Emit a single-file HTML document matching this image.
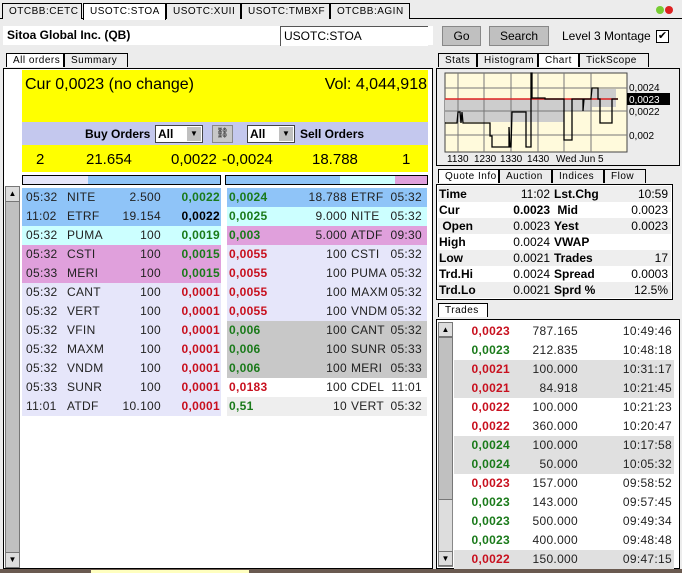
<!DOCTYPE html>
<html><head><style>
*{margin:0;padding:0;box-sizing:border-box}
body{width:682px;height:573px;background:#ececec;font-family:"Liberation Sans",Arial,sans-serif;font-size:12px;position:relative;overflow:hidden;color:#000}
.a{position:absolute}
.tab{position:absolute;top:3px;height:16px;font-size:10px;letter-spacing:0.5px;padding-left:6px;line-height:15px;border:1px solid #000;border-bottom:none;background:#ececec}
.st{position:absolute;height:14px;font-size:10px;letter-spacing:0.5px;padding-left:6px;line-height:13px;border:1px solid #000;border-bottom:none;background:#ececec}
.row{position:absolute;height:19px;line-height:19px;font-size:12px;color:#222;letter-spacing:0.3px}
.row span{position:absolute}
.g{color:#1a7a1a;font-weight:bold}
.r{color:#c8101e;font-weight:bold}
.q{position:absolute;left:438px;width:233px;height:16px;line-height:16px;font-size:12px}
.q span{position:absolute}
.b{font-weight:bold}
.tr{position:absolute;left:454px;width:220px;height:19px;line-height:19px;font-size:12px;color:#222;letter-spacing:0.3px}
.tr span{position:absolute}
</style></head><body>
<div class="a" style="left:0;top:18px;width:682px;height:1px;background:#000"></div>
<div class="tab" style="left:2px;width:80px">OTCBB:CETC</div>
<div class="tab" style="left:83px;width:83px;background:#fff;height:17px">USOTC:STOA</div>
<div class="tab" style="left:166px;width:75px">USOTC:XUII</div>
<div class="tab" style="left:241px;width:89px">USOTC:TMBXF</div>
<div class="tab" style="left:330px;width:80px">OTCBB:AGIN</div>
<div class="a" style="left:656px;top:6px;width:8px;height:8px;border-radius:50%;background:#7c3"></div>
<div class="a" style="left:665px;top:6px;width:8px;height:8px;border-radius:50%;background:#d22"></div>
<div class="a" style="left:3px;top:26px;width:430px;height:19px;background:#fff"></div>
<div class="a b" style="left:7px;top:28px;font-size:12px">Sitoa Global Inc. (QB)</div>
<div class="a" style="left:280px;top:26px;width:148px;height:20px;background:#fff;border-top:1px solid #555;border-left:1px solid #555;padding-left:3px;line-height:18px">USOTC:STOA</div>
<div class="a" style="left:442px;top:26px;width:39px;height:20px;background:#c0c0c0;border:1px solid #888;text-align:center;line-height:18px">Go</div>
<div class="a" style="left:489px;top:26px;width:60px;height:20px;background:#c0c0c0;border:1px solid #888;text-align:center;line-height:18px">Search</div>
<div class="a" style="left:562px;top:29px">Level 3 Montage</div>
<div class="a" style="left:656px;top:30px;width:13px;height:13px;background:#fff;border:1px solid #000;font-size:11px;line-height:11px;text-align:center">✔</div>
<div class="st" style="left:6px;top:53px;width:58px;background:#fff">All orders</div>
<div class="st" style="left:64px;top:53px;width:64px">Summary</div>
<div class="a" style="left:3px;top:68px;width:430px;height:501px;border:1px solid #000;background:#fff"></div>
<div class="a" style="left:22px;top:70px;width:406px;height:52px;background:#ffff00"></div>
<div class="a" style="left:25px;top:76px;font-size:16px">Cur 0,0023 (no change)</div>
<div class="a" style="right:255px;top:76px;font-size:16px">Vol: 4,044,918</div>
<div class="a" style="left:22px;top:122px;width:406px;height:23px;background:#c4c8ee"></div>
<div class="a b" style="left:85px;top:127px">Buy Orders</div>
<div class="a b" style="left:155px;top:125px;width:48px;height:18px;background:#fff;border:1px solid #444;padding-left:2px;line-height:16px">All<span style="position:absolute;right:1px;top:1px;width:14px;height:14px;background:#c0c0c0;font-size:8px;text-align:center;line-height:14px">▼</span></div>
<div class="a" style="left:212px;top:125px;width:21px;height:18px;background:#c8c8c8;border:1px solid #888;font-size:10px;text-align:center;line-height:16px">⛓</div>
<div class="a b" style="left:247px;top:125px;width:48px;height:18px;background:#fff;border:1px solid #444;padding-left:2px;line-height:16px">All<span style="position:absolute;right:1px;top:1px;width:14px;height:14px;background:#c0c0c0;font-size:8px;text-align:center;line-height:14px">▼</span></div>
<div class="a b" style="left:300px;top:127px">Sell Orders</div>
<div class="a" style="left:22px;top:145px;width:406px;height:27px;background:#ffff00;font-size:15px"></div>
<div class="a" style="left:36px;top:151px;font-size:15px">2</div>
<div class="a" style="left:86px;top:151px;font-size:15px">21.654</div>
<div class="a" style="left:171px;top:151px;font-size:15px">0,0022</div>
<div class="a" style="left:222px;top:151px;font-size:15px">-0,0024</div>
<div class="a" style="left:312px;top:151px;font-size:15px">18.788</div>
<div class="a" style="left:402px;top:151px;font-size:15px">1</div>
<div class="a" style="left:22px;top:175px;width:199px;height:10px;border:1px solid #000;background:linear-gradient(90deg,#e6e6fa 0 65px,#8fc4f8 65px)"></div>
<div class="a" style="left:225px;top:175px;width:203px;height:10px;border:1px solid #000;background:linear-gradient(90deg,#8fc4f8 0 114px,#ccffff 114px 169px,#e0a0dc 169px)"></div>
<div class="a" style="left:5px;top:186px;width:15px;height:382px;background:#c0c0c0;border:1px solid #777"></div>
<div class="a" style="left:5px;top:186px;width:15px;height:16px;background:#ddd;border:1px solid #777;font-size:8px;text-align:center;line-height:14px">▲</div>
<div class="a" style="left:5px;top:552px;width:15px;height:16px;background:#ddd;border:1px solid #777;font-size:8px;text-align:center;line-height:14px">▼</div>
<div id="rows"></div>
<div class="st" style="left:438px;top:53px;width:39px">Stats</div>
<div class="st" style="left:477px;top:53px;width:61px">Histogram</div>
<div class="st" style="left:538px;top:53px;width:41px;background:#fff">Chart</div>
<div class="st" style="left:579px;top:53px;width:70px">TickScope</div>
<div class="a" style="left:436px;top:68px;width:244px;height:98px;border:1px solid #000;background:#ececec"></div>
<svg class="a" style="left:436px;top:66px" width="246" height="100">
<rect x="9" y="7" width="182" height="79" fill="#fffadc" stroke="#444"/>
<rect x="9" y="33" width="119" height="23" fill="#cdcdcd"/>
<rect x="128" y="33" width="28" height="12" fill="#cdcdcd"/>
<rect x="156" y="23" width="24" height="18" fill="#cdcdcd"/>
<g stroke="#777" stroke-width="1">
<line x1="22" y1="7" x2="22" y2="86"/><line x1="48" y1="7" x2="48" y2="86"/><line x1="75" y1="7" x2="75" y2="86"/><line x1="102" y1="7" x2="102" y2="86"/><line x1="128" y1="7" x2="128" y2="86"/><line x1="155" y1="7" x2="155" y2="86"/>
<line x1="9" y1="22" x2="191" y2="22"/><line x1="9" y1="45" x2="191" y2="45"/><line x1="9" y1="69" x2="191" y2="69"/>
</g>
<line x1="9" y1="33" x2="182" y2="33" stroke="#d22" stroke-width="1.5"/>
<polyline fill="none" stroke="#000" stroke-width="1.3" points="9,57 21,57 22,46 24,46 25,57 26,46 27,57 54,57 54,70 56,70 56,81 73,81 73,61 74,81 75,81 76,46 90,46 90,81 95,81 95,7 96,7 96,32 109,32 109,33 128,33 128,74 136,74 136,33 147,33 147,45 148,33 155,33 155,32 156,22 162,22 162,33 164,33 164,57 176,57 176,33 182,33"/>
<g font-size="10" font-family="Liberation Sans">
<text x="193" y="25">0,0024</text>
<rect x="191" y="27" width="43" height="12" fill="#000"/>
<text x="193" y="37" fill="#fff">0,0023</text>
<text x="193" y="49">0,0022</text>
<text x="193" y="73">0,002</text>
<text x="11" y="96">1130</text><text x="38" y="96">1230</text><text x="64" y="96">1330</text><text x="91" y="96">1430</text><text x="120" y="96">Wed Jun 5</text>
</g>
</svg>
<div class="st" style="left:438px;top:169px;width:61px;background:#fff">Quote Info</div>
<div class="st" style="left:499px;top:169px;width:53px">Auction</div>
<div class="st" style="left:552px;top:169px;width:52px">Indices</div>
<div class="st" style="left:604px;top:169px;width:42px">Flow</div>
<div class="a" style="left:436px;top:184px;width:237px;height:116px;border:1px solid #000;background:#fff"></div>
<div id="quote"></div>
<div class="st" style="left:438px;top:303px;width:50px;background:#fff">Trades</div>
<div class="a" style="left:436px;top:319px;width:244px;height:250px;border:1px solid #000;background:#fff"></div>
<div class="a" style="left:438px;top:322px;width:15px;height:245px;background:#ddd;border:1px solid #888"></div>
<div class="a" style="left:438px;top:337px;width:15px;height:163px;background:#c0c0c0;border:1px solid #777"></div>
<div class="a" style="left:438px;top:322px;width:15px;height:15px;background:#ddd;border:1px solid #777;font-size:8px;text-align:center;line-height:13px">▲</div>
<div class="a" style="left:438px;top:551px;width:15px;height:15px;background:#ddd;border:1px solid #777;font-size:8px;text-align:center;line-height:13px">▼</div>
<div id="trades"></div>
<div class="a" style="left:0;top:569px;width:682px;height:4px;background:#6a5a50"></div>
<div class="a" style="left:91px;top:570px;width:158px;height:3px;background:#ffffc0"></div>
<script>
var L=[["05:32","NITE","2.500","0,0022","g","#8fc4f8"],["11:02","ETRF","19.154","0,0022","b","#8fc4f8"],["05:32","PUMA","100","0,0019","g","#ccffff"],["05:32","CSTI","100","0,0015","g","#e0a0dc"],["05:33","MERI","100","0,0015","g","#e0a0dc"],["05:32","CANT","100","0,0001","r","#e6e6fa"],["05:32","VERT","100","0,0001","r","#e6e6fa"],["05:32","VFIN","100","0,0001","r","#e6e6fa"],["05:32","MAXM","100","0,0001","r","#e6e6fa"],["05:32","VNDM","100","0,0001","r","#e6e6fa"],["05:33","SUNR","100","0,0001","r","#e6e6fa"],["11:01","ATDF","10.100","0,0001","r","#e6e6fa"]];
var R=[["0,0024","g","18.788","ETRF","05:32","#8fc4f8"],["0,0025","g","9.000","NITE","05:32","#ccffff"],["0,003","g","5.000","ATDF","09:30","#e0a0dc"],["0,0055","r","100","CSTI","05:32","#e6e6fa"],["0,0055","r","100","PUMA","05:32","#e6e6fa"],["0,0055","r","100","MAXM","05:32","#e6e6fa"],["0,0055","r","100","VNDM","05:32","#e6e6fa"],["0,006","g","100","CANT","05:32","#c8c8c8"],["0,006","g","100","SUNR","05:33","#c8c8c8"],["0,006","g","100","MERI","05:33","#c8c8c8"],["0,0183","r","100","CDEL","11:01","#fff"],["0,51","g","10","VERT","05:32","#eeeeee"]];
var h="";
for(var i=0;i<12;i++){var y=188+i*19,a=L[i],b=R[i];
h+='<div class="row" style="left:22px;top:'+y+'px;width:199px;background:'+a[5]+'"><span style="left:4px">'+a[0]+'</span><span style="left:45px">'+a[1]+'</span><span style="right:60px">'+a[2]+'</span><span class="'+a[4]+'" style="right:1px;'+(a[4]=="b"?"font-weight:bold;color:#000":"")+'">'+a[3]+'</span></div>';
h+='<div class="row" style="left:227px;top:'+y+'px;width:200px;background:'+b[5]+'"><span class="'+b[1]+'" style="left:2px">'+b[0]+'</span><span style="right:80px">'+b[2]+'</span><span style="left:124px">'+b[3]+'</span><span style="right:5px">'+b[4]+'</span></div>';}
document.getElementById("rows").innerHTML=h;
var Q=[["Time","11:02","Lst.Chg","10:59"],["Cur","0.0023"," Mid","0.0023"],[" Open","0.0023","Yest","0.0023"],["High","0.0024","VWAP",""],["Low","0.0021","Trades","17"],["Trd.Hi","0.0024","Spread","0.0003"],["Trd.Lo","0.0021","Sprd %","12.5%"]];
h="";for(i=0;i<7;i++){var q=Q[i];h+='<div class="q" style="top:'+(186+i*16)+'px;background:'+(i%2?"#fff":"#eee")+'"><span class="b" style="left:1px;white-space:pre">'+q[0]+'</span><span style="right:121px;'+(i==1?"font-weight:bold":"")+'">'+q[1]+'</span><span class="b" style="left:116px;white-space:pre">'+q[2]+'</span><span style="right:3px">'+q[3]+'</span></div>';}
document.getElementById("quote").innerHTML=h;
var T=[["0,0023","r","787.165","10:49:46",0],["0,0023","g","212.835","10:48:18",0],["0,0021","r","100.000","10:31:17",1],["0,0021","r","84.918","10:21:45",1],["0,0022","r","100.000","10:21:23",0],["0,0022","r","360.000","10:20:47",0],["0,0024","g","100.000","10:17:58",1],["0,0024","g","50.000","10:05:32",1],["0,0023","r","157.000","09:58:52",0],["0,0023","g","143.000","09:57:45",0],["0,0023","g","500.000","09:49:34",0],["0,0023","g","400.000","09:48:48",0],["0,0022","r","150.000","09:47:15",1]];
h="";for(i=0;i<13;i++){var t=T[i];h+='<div class="tr" style="top:'+(322+i*19)+'px;background:'+(t[4]?"#e0e0e0":"#fff")+'"><span class="'+t[1]+'" style="right:164px">'+t[0]+'</span><span style="right:96px">'+t[2]+'</span><span style="right:2px">'+t[3]+'</span></div>';}
document.getElementById("trades").innerHTML=h;
</script>
</body></html>
